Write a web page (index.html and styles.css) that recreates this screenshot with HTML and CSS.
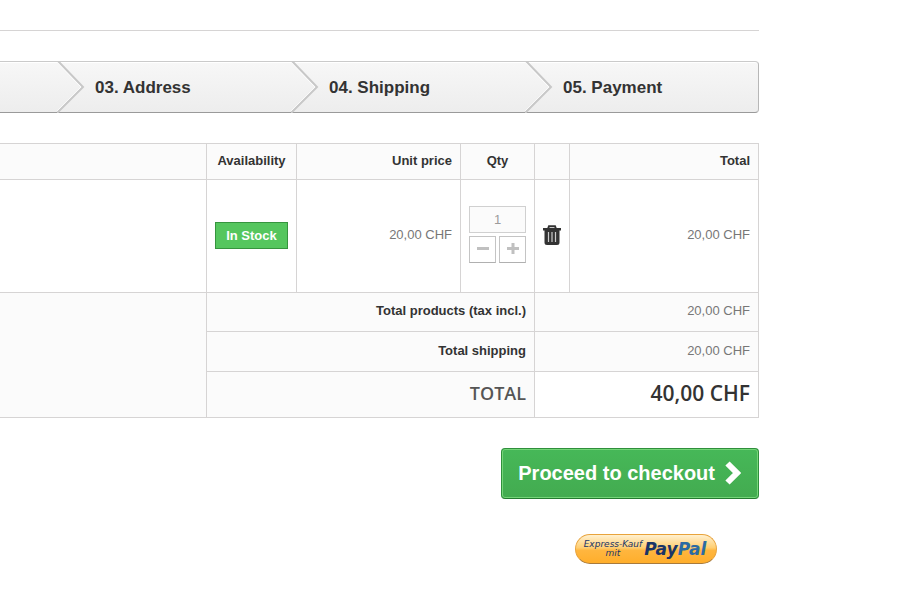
FILE: index.html
```html
<!DOCTYPE html>
<html lang="en">
  <head>
    <meta charset="UTF-8" />
    <meta name="viewport" content="width=device-width, initial-scale=1.0" />
    <title>Shopping cart</title>
    <link rel="stylesheet" href="styles.css">
  </head>
  <body>
    <main class="container">
      <hr class="divider" />

      <ol class="steps">
        <li class="step"></li>
        <li class="step">
          <svg class="step-arrow" viewBox="0 0 28 52" aria-hidden="true">
            <path class="arrow-shine" d="M-1 0 L24 26 L-2 52" />
            <path class="arrow-line" d="M1 0 L26 26 L0 52" />
          </svg>
          03. Address
        </li>
        <li class="step">
          <svg class="step-arrow" viewBox="0 0 28 52" aria-hidden="true">
            <path class="arrow-shine" d="M-1 0 L24 26 L-2 52" />
            <path class="arrow-line" d="M1 0 L26 26 L0 52" />
          </svg>
          04. Shipping
        </li>
        <li class="step">
          <svg class="step-arrow" viewBox="0 0 28 52" aria-hidden="true">
            <path class="arrow-shine" d="M-1 0 L24 26 L-2 52" />
            <path class="arrow-line" d="M1 0 L26 26 L0 52" />
          </svg>
          05. Payment
        </li>
      </ol>

      <table class="cart">
        <colgroup>
          <col />
          <col class="col-avail" />
          <col class="col-unit" />
          <col class="col-qty" />
          <col class="col-delete" />
          <col class="col-total" />
        </colgroup>
        <thead>
          <tr>
            <th></th>
            <th class="center" scope="col">Availability</th>
            <th scope="col">Unit price</th>
            <th class="center" scope="col">Qty</th>
            <th></th>
            <th scope="col">Total</th>
          </tr>
        </thead>
        <tbody>
          <tr>
            <td></td>
            <td class="center"><span class="label">In Stock</span></td>
            <td>20,00 CHF</td>
            <td>
              <div class="qty">
                <input class="qty-input" type="text" value="1" aria-label="Quantity" />
                <button class="qty-button" type="button" aria-label="Subtract">
                  <svg viewBox="0 0 12 12" width="12" height="12"><path d="M0 4h12v3H0z" /></svg>
                </button>
                <button class="qty-button" type="button" aria-label="Add">
                  <svg viewBox="0 0 12 12" width="12" height="12"><path d="M4.500 0h3v4H12v3H7.500v4h-3V7H0V4h4.500z" /></svg>
                </button>
              </div>
            </td>
            <td class="center">
              <button class="delete" type="button" aria-label="Delete">
                <svg viewBox="0 0 18 20" width="18" height="20">
                  <path d="M5 4 L6 1.200 H12 L13 4" fill="none" stroke="#333" stroke-width="2" />
                  <path d="M0 3h18v2.500h-1.500v12a2.500 2.500 0 0 1-2.500 2.500h-10A2.500 2.500 0 0 1 1.500 17.500V5.500H0z" fill="#333" />
                  <path d="M5.500 7v10M9 7v10M12.500 7v10" stroke="#ccc" stroke-width="1.200" />
                </svg>
              </button>
            </td>
            <td>20,00 CHF</td>
          </tr>
        </tbody>
        <tfoot>
          <tr class="row-products">
            <td rowspan="3"></td>
            <th colspan="3" scope="row">Total products (tax incl.)</th>
            <td colspan="2">20,00 CHF</td>
          </tr>
          <tr class="row-shipping">
            <th colspan="3" scope="row">Total shipping</th>
            <td colspan="2">20,00 CHF</td>
          </tr>
          <tr class="row-total">
            <th colspan="3" scope="row">TOTAL</th>
            <td class="grand-total" colspan="2">40,00 CHF</td>
          </tr>
        </tfoot>
      </table>

      <div class="actions">
        <button class="checkout" type="button">
          Proceed to checkout
          <svg viewBox="0 0 16 24" width="16" height="24" aria-hidden="true">
            <path d="M2.500 2.500 L12 12 L2.500 21.500" fill="none" stroke="#fff" stroke-width="6" />
          </svg>
        </button>
        <button class="paypal" type="button">
          <span class="paypal-text">Express-Kauf<br />mit</span>
          <span class="paypal-logo">Pay<span class="pal">Pal</span></span>
        </button>
      </div>
    </main>
  </body>
</html>
```
FILE: styles.css
```css
* {
  box-sizing: border-box;
}

body {
  margin: 0;
  background: #fff;
  color: #777;
  font: 13px/18px "Liberation Sans", Arial, sans-serif;
}

button,
input {
  font: inherit;
}

.container {
  margin-right: 164px;
  padding-top: 30px;
}

.divider {
  margin: 0 0 30px;
  border: 0;
  border-top: 1px solid #d6d4d4;
}

/* checkout steps */
.steps {
  display: grid;
  grid-template-columns: 1fr repeat(3, 234px);
  height: 52px;
  margin: 0 0 30px;
  padding: 0;
  list-style: none;
  border: 1px solid #b7b7b7;
  border-top-color: #cacaca;
  border-bottom-color: #9a9a9a;
  border-left: 0;
  border-radius: 0 4px 4px 0;
  background: linear-gradient(#f7f7f7, #ededed);
  box-shadow: inset 0 1px #fff;
}

.step {
  position: relative;
  padding-left: 39px;
  color: #333;
  font-size: 17px;
  font-weight: bold;
  line-height: 52px;
}

.step-arrow {
  position: absolute;
  top: -1px;
  left: 1px;
  width: 28px;
  height: 52px;
  overflow: hidden;
}

.step-arrow path {
  fill: none;
}

.arrow-line {
  stroke: #c8c8c8;
  stroke-width: 2;
}

.arrow-shine {
  stroke: #fff;
  stroke-width: 1;
}

/* cart table */
.cart {
  width: 100%;
  margin-bottom: 30px;
  table-layout: fixed;
  border-collapse: collapse;
}

.col-avail {
  width: 90px;
}

.col-unit {
  width: 164px;
}

.col-qty {
  width: 74px;
}

.col-delete {
  width: 35px;
}

.col-total {
  width: 189px;
}

.cart th,
.cart td {
  padding: 0 8px 2px;
  border: 1px solid #d6d4d4;
  text-align: right;
}

.cart th:first-child:empty,
.cart td:first-child:empty {
  border-left: 0;
}

.cart th {
  color: #333;
}

.cart .center {
  padding: 0 0 2px;
  text-align: center;
}

.cart thead tr {
  height: 36px;
}

.cart tbody tr {
  height: 113px;
}

.cart thead,
.cart tfoot {
  background: #fbfbfb;
}

.row-products {
  height: 39px;
}

.row-shipping {
  height: 40px;
}

.row-total {
  height: 46px;
}

.cart .row-total th,
.cart .row-total td {
  padding-bottom: 4px;
  font-family: "Open Sans", sans-serif;
  font-weight: 600;
}

.cart .row-total th {
  color: #555;
  font-size: 18px;
}

.cart .grand-total {
  background: #fff;
  color: #333;
  font-size: 21px;
}

.label {
  display: inline-block;
  padding: 4px 10px;
  border: 1px solid #36943e;
  background: #55c65e;
  color: #fff;
  font-weight: bold;
  line-height: 17px;
}

.qty {
  display: grid;
  grid-template-columns: 27px 27px;
  gap: 3px;
  padding-bottom: 2px;
}

.qty-input {
  grid-column: span 2;
  width: 100%;
  height: 27px;
  padding: 0;
  border: 1px solid #d0d0d0;
  background: #fbfbfb;
  color: #9c9b9b;
  text-align: center;
}

.qty-button {
  display: grid;
  place-items: center;
  height: 27px;
  padding: 0;
  border: 1px solid #c4c4c4;
  border-bottom-color: #b0b0b0;
  background: #fff;
}

.qty-button path {
  fill: #c0c0c0;
}

.delete {
  display: inline-block;
  padding: 0;
  border: 0;
  background: none;
  vertical-align: middle;
}

.delete svg {
  display: block;
}

/* buttons under the cart */
.actions {
  display: flex;
  flex-direction: column;
  align-items: flex-end;
  gap: 35px;
}

.checkout {
  display: flex;
  align-items: center;
  gap: 10px;
  height: 51px;
  padding: 0 17px 2px 16px;
  border: 1px solid #2f8f3c;
  border-bottom-color: #247a30;
  border-radius: 4px;
  background: linear-gradient(#46b858, #43ab50);
  box-shadow: inset 0 0 0 1px #74d578;
  color: #fff;
  font-size: 20px;
  font-weight: bold;
}

.paypal {
  display: flex;
  align-items: center;
  justify-content: center;
  gap: 2px;
  width: 142px;
  height: 30px;
  margin-right: 42px;
  padding: 0 2px 0 0;
  border: 1px solid #e8a33c;
  border-bottom-color: #a87a3c;
  border-radius: 15px;
  background: linear-gradient(#fff0cf, #ffcf73 45%, #ffb63f 55%, #ffae2b);
  color: #1a3467;
  font-family: "DejaVu Sans", Verdana, sans-serif;
  font-style: italic;
}

.paypal-text {
  font-size: 9px;
  line-height: 9px;
}

.paypal-logo {
  font-size: 17px;
  font-weight: bold;
}

.pal {
  color: #2b6ba3;
}
```
